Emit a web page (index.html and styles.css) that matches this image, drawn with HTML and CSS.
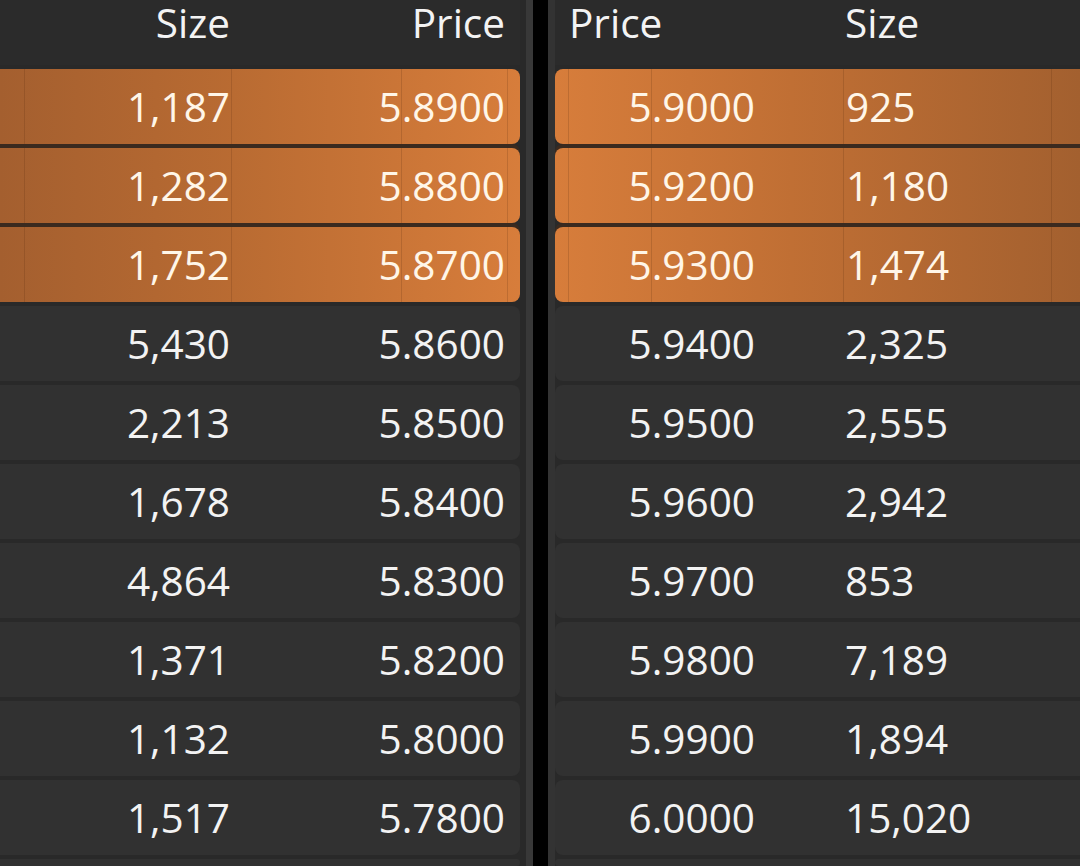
FILE: index.html
```html
<!DOCTYPE html>
<html lang="en">
<head>
<meta charset="utf-8">
<title>Order book</title>
<link rel="stylesheet" href="styles.css">
</head>
<body>
<main class="book">
  <section class="side bids">
    <div class="head">
      <span class="c edge"></span>
      <span class="c size">Size</span>
      <span class="c gap"></span>
      <span class="c price">Price</span>
      <span class="c edge"></span>
    </div>
    <div class="rows">
      <div class="row hi"><span class="c edge"></span><span class="c size">1,187</span><span class="c gap"></span><span class="c price">5.8900</span><span class="c edge"></span></div>
      <div class="row hi"><span class="c edge"></span><span class="c size">1,282</span><span class="c gap"></span><span class="c price">5.8800</span><span class="c edge"></span></div>
      <div class="row hi"><span class="c edge"></span><span class="c size">1,752</span><span class="c gap"></span><span class="c price">5.8700</span><span class="c edge"></span></div>
      <div class="row"><span class="c edge"></span><span class="c size">5,430</span><span class="c gap"></span><span class="c price">5.8600</span><span class="c edge"></span></div>
      <div class="row"><span class="c edge"></span><span class="c size">2,213</span><span class="c gap"></span><span class="c price">5.8500</span><span class="c edge"></span></div>
      <div class="row"><span class="c edge"></span><span class="c size">1,678</span><span class="c gap"></span><span class="c price">5.8400</span><span class="c edge"></span></div>
      <div class="row"><span class="c edge"></span><span class="c size">4,864</span><span class="c gap"></span><span class="c price">5.8300</span><span class="c edge"></span></div>
      <div class="row"><span class="c edge"></span><span class="c size">1,371</span><span class="c gap"></span><span class="c price">5.8200</span><span class="c edge"></span></div>
      <div class="row"><span class="c edge"></span><span class="c size">1,132</span><span class="c gap"></span><span class="c price">5.8000</span><span class="c edge"></span></div>
      <div class="row"><span class="c edge"></span><span class="c size">1,517</span><span class="c gap"></span><span class="c price">5.7800</span><span class="c edge"></span></div>
      <div class="row cut"></div>
    </div>
  </section>
  <div class="divider"></div>
  <section class="side asks">
    <div class="head">
      <span class="c edge"></span>
      <span class="c gap label">Price</span>
      <span class="c price"></span>
      <span class="c size">Size</span>
      <span class="c edge"></span>
    </div>
    <div class="rows">
      <div class="row hi"><span class="c edge"></span><span class="c gap"></span><span class="c price">5.9000</span><span class="c size">925</span><span class="c edge"></span></div>
      <div class="row hi"><span class="c edge"></span><span class="c gap"></span><span class="c price">5.9200</span><span class="c size">1,180</span><span class="c edge"></span></div>
      <div class="row hi"><span class="c edge"></span><span class="c gap"></span><span class="c price">5.9300</span><span class="c size">1,474</span><span class="c edge"></span></div>
      <div class="row"><span class="c edge"></span><span class="c gap"></span><span class="c price">5.9400</span><span class="c size">2,325</span><span class="c edge"></span></div>
      <div class="row"><span class="c edge"></span><span class="c gap"></span><span class="c price">5.9500</span><span class="c size">2,555</span><span class="c edge"></span></div>
      <div class="row"><span class="c edge"></span><span class="c gap"></span><span class="c price">5.9600</span><span class="c size">2,942</span><span class="c edge"></span></div>
      <div class="row"><span class="c edge"></span><span class="c gap"></span><span class="c price">5.9700</span><span class="c size">853</span><span class="c edge"></span></div>
      <div class="row"><span class="c edge"></span><span class="c gap"></span><span class="c price">5.9800</span><span class="c size">7,189</span><span class="c edge"></span></div>
      <div class="row"><span class="c edge"></span><span class="c gap"></span><span class="c price">5.9900</span><span class="c size">1,894</span><span class="c edge"></span></div>
      <div class="row"><span class="c edge"></span><span class="c gap"></span><span class="c price">6.0000</span><span class="c size">15,020</span><span class="c edge"></span></div>
      <div class="row cut"></div>
    </div>
  </section>
</main>
</body>
</html>
```

FILE: styles.css
```css
* { box-sizing: border-box; }

html, body {
  margin: 0;
  padding: 0;
  height: 866px;
  overflow: hidden;
  background: #292929;
}

body {
  font-family: "Open Sans", "Noto Sans", sans-serif;
  font-size: 40.5px;
  color: #f3f3f3;
}

.book {
  display: flex;
  height: 866px;
}

.side {
  display: flex;
  flex-direction: column;
  background: #292929;
}

.bids {
  width: 526px;
  padding-right: 6px;
}

.asks {
  flex: 1;
}

.divider {
  width: 29px;
  flex: none;
  background: #000;
  border-left: 7px solid #383838;
  border-right: 7px solid #333;
}

.head,
.row {
  display: grid;
}

.bids .head,
.bids .row {
  grid-template-columns: 24px 207px 170px 106px 13px;
}

.asks .head,
.asks .row {
  grid-template-columns: 13px 83px 192px 208px 29px;
}

.head {
  flex: none;
  height: 65px;
  background: #2b2b2b;
  line-height: 45px;
  margin-bottom: 4px;
}

.rows {
  flex: none;
  display: flex;
  flex-direction: column;
  gap: 4px;
}

.row {
  height: 75px;
  flex: none;
  line-height: 75px;
  background: #313131;
}

.row.cut {
  height: 7px;
}

.bids .row { border-radius: 0 8px 8px 0; }
.asks .row { border-radius: 8px 0 0 8px; }

.c {
  display: flex;
  white-space: nowrap;
  min-width: 0;
}

.bids .size { justify-content: flex-end; padding-right: 1px; }
.bids .price { justify-content: flex-end; padding-right: 2px; }
.asks .price { justify-content: flex-end; padding-right: 88px; }
.asks .size { justify-content: flex-start; padding-left: 2px; }
.asks .label { padding-left: 1px; }

.row.hi {
  color: #fff6e8;
}

.bids .row.hi {
  background: linear-gradient(to right, #a45f2f 0%, #b96b32 45%, #d77d3b 100%);
}

.asks .row.hi {
  background: linear-gradient(to right, #d77d3b 0%, #c06f34 45%, #a3602f 100%);
}

.row.hi + .row.hi {
  box-shadow: 0 -4px 0 #3a2a1f;
}

.row.hi .c + .c {
  border-left: 1px solid rgba(90, 45, 15, 0.2);
}
```
